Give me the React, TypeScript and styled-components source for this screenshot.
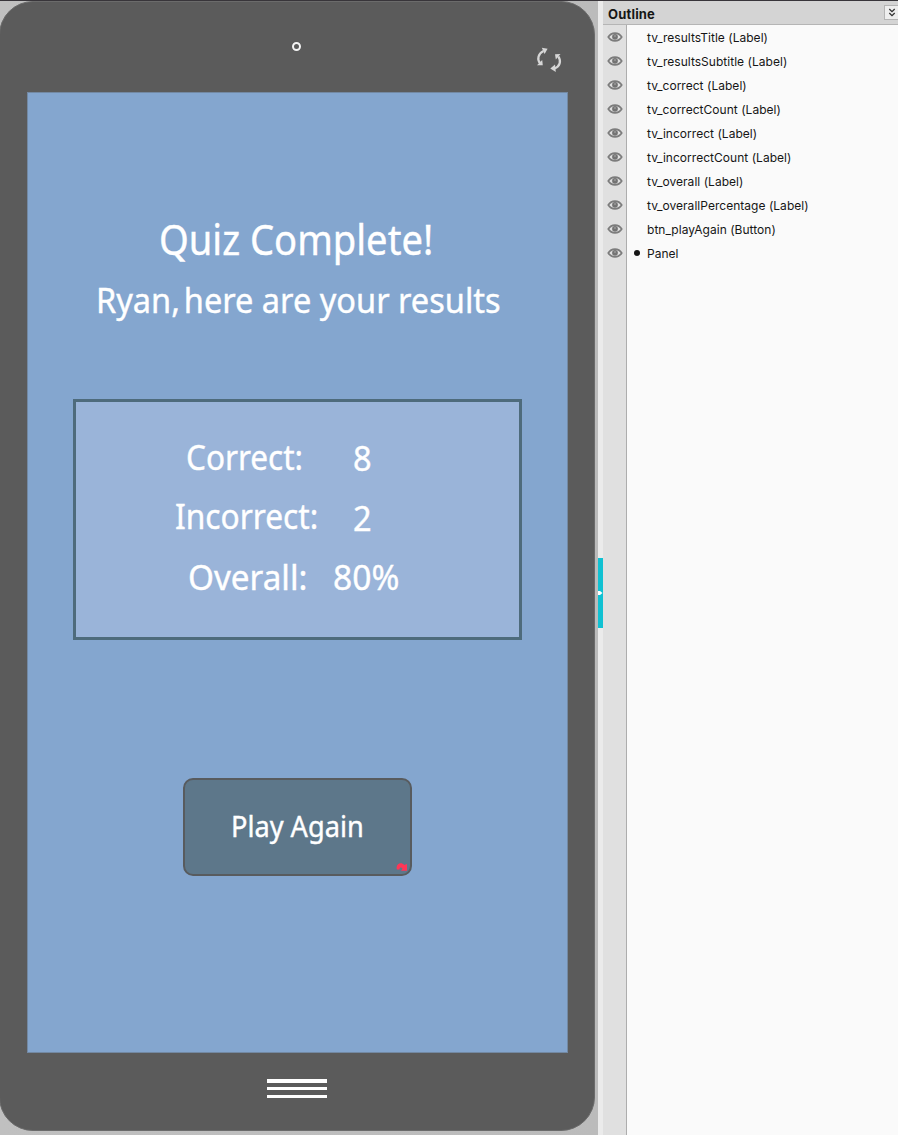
import React from "react";
import styled, { createGlobalStyle } from "styled-components";

const GlobalStyle = createGlobalStyle`
  *, *::before, *::after { box-sizing: border-box; }
  body { margin: 0; overflow: hidden; }
`;

const Editor = styled.div`
  display: flex;
  width: 898px;
  height: 1135px;
  border-top: 1px solid #38353a;
  background: #fafafa;
  overflow: hidden;
`;

const Stage = styled.main`
  width: 598px;
  flex: none;
  background: linear-gradient(90deg, #c0c0c0, #bbb);
`;

const Phone = styled.div`
  display: flex;
  flex-direction: column;
  width: 595.5px;
  height: 1130px;
  margin-top: -0.5px;
  margin-left: -1px;
  border: 1px solid #6b6b6b;
  border-radius: 34px;
  background: #5b5b5b;
`;

const PhoneTop = styled.div`
  display: flex;
  height: 90.4px;
  flex: none;
`;

const Camera = styled.span`
  width: 9.4px;
  height: 9.4px;
  margin: 40.4px 0 0 292px;
  border: 2px solid #f4f4f4;
  border-radius: 50%;
`;

const RotateIcon = styled.svg`
  width: 28px;
  height: 28px;
  margin: 43px 0 0 233.6px;
`;

const Screen = styled.section`
  display: flex;
  flex-direction: column;
  align-items: flex-start;
  width: 541px;
  height: 961px;
  flex: none;
  margin-left: 27px;
  padding-top: 117px;
  border: 1px solid #7389a3;
  background: #84a6cf;
  color: #fff;
  font-family: "Noto Sans", sans-serif;
`;

const Line = styled.div<{ $left: number; $size: number; $height: number; $stretch: number }>`
  flex: none;
  margin-left: ${(p) => p.$left}px;
  font-size: ${(p) => p.$size}px;
  height: ${(p) => p.$height}px;
  line-height: ${(p) => p.$height}px;
  white-space: nowrap;
  -webkit-text-stroke: 0.4px #fff;
  transform: scaleX(${(p) => p.$stretch});
  transform-origin: 0 50%;
`;

const Comma = styled.span`
  letter-spacing: -5px;
`;

const ResultsPanel = styled.div`
  width: 449px;
  height: 241px;
  margin: 67px 0 0 45px;
  padding-top: 25px;
  border: 3px solid #4e6b7c;
  background: #9ab4d9;
`;

const ResultRow = styled.div`
  display: grid;
  grid-template-columns: 257px 1fr;
  height: 60px;
`;

const PlayButton = styled.button`
  display: flex;
  position: relative;
  width: 229px;
  height: 98px;
  margin: 138px 0 0 155px;
  padding: 0;
  border: 2px solid #585b5e;
  border-radius: 10px;
  background: #5d778a;
  color: #fff;
  font-family: inherit;
`;

const LinkMark = styled.svg`
  position: absolute;
  right: 2px;
  bottom: 2px;
  width: 12px;
  height: 10px;
`;

const PhoneBottom = styled.div`
  display: flex;
  flex-direction: column;
  gap: 4.5px;
  padding: 26.6px 0 0 267px;
`;

const MenuBar = styled.span`
  width: 60px;
  height: 3.1px;
  background: #fff;
`;

const Splitter = styled.div`
  display: flex;
  flex-direction: column;
  justify-content: center;
  width: 5px;
  flex: none;
  padding-top: 50px;
  background: #ebebeb;
`;

const Handle = styled.div`
  display: flex;
  align-items: center;
  width: 5px;
  height: 70px;
  margin-top: -1px;
  background: #10c1d2;
`;

const Outline = styled.aside`
  display: flex;
  flex-direction: column;
  flex: 1;
  font-family: Inter, sans-serif;
  color: #161616;
`;

const OutlineHeader = styled.header`
  display: flex;
  justify-content: space-between;
  height: 24px;
  flex: none;
  padding-left: 5px;
  border-bottom: 1px solid #b5b5b5;
  background: #d4d4d4;
`;

const OutlineTitle = styled.h1`
  margin: 0;
  font-size: 13px;
  font-weight: 700;
  letter-spacing: 0.18px;
  line-height: 27px;
`;

const Collapse = styled.button`
  display: flex;
  width: 14px;
  height: 15px;
  margin-top: 4px;
  padding: 2px 0 0 3px;
  border: 1px solid #b4b4b4;
  border-right: 0;
  background: #eee;
`;

const Tree = styled.ul`
  flex: 1;
  margin: 0;
  padding: 0;
  list-style: none;
  background: linear-gradient(90deg, #e0e0e0 23px, #adadad 23px, #adadad 24px, #fafafa 24px);
`;

const TreeRow = styled.li`
  display: grid;
  grid-template-columns: 24px 20px 1fr;
  align-items: center;
  height: 24px;
  font-size: 12px;
  letter-spacing: 0.03px;
  line-height: 24px;
  white-space: nowrap;
`;

const Dot = styled.i`
  width: 6px;
  height: 6px;
  margin: -1px 0 0 7px;
  border-radius: 50%;
  background: #151515;
`;

const Name = styled.span`
  grid-column: 3;
  padding-top: 1px;
`;

const EyeIcon = styled.svg`
  width: 16px;
  height: 12px;
  margin: -1px 0 0 4px;
`;

const items = [
  "tv_resultsTitle (Label)",
  "tv_resultsSubtitle (Label)",
  "tv_correct (Label)",
  "tv_correctCount (Label)",
  "tv_incorrect (Label)",
  "tv_incorrectCount (Label)",
  "tv_overall (Label)",
  "tv_overallPercentage (Label)",
  "btn_playAgain (Button)",
  "Panel",
];

function Eye() {
  return (
    <EyeIcon viewBox="0 0 16 12">
      <path d="M1.3 6C4.4.7 11.6.7 14.7 6C11.6 11.1 4.4 11.1 1.3 6Z" fill="none" stroke="#7c7c7c" strokeWidth="1.7" />
      <circle cx="8" cy="5.8" r="2.9" fill="#747474" />
      <path d="M8 4v2" stroke="#aaa" strokeWidth="1" />
    </EyeIcon>
  );
}

export default function App() {
  return (
    <>
      <GlobalStyle />
      <Editor>
        <Stage>
          <Phone>
            <PhoneTop>
              <Camera />
              <RotateIcon viewBox="0 0 28 28" fill="none" stroke="#d6d6d6" strokeWidth="2.2">
                <path d="M5.2 18.5C1.8 14.5 3 8.5 8.5 6" />
                <path d="M6.8 2.8L12.6 3.7L9.6 9Z" fill="#d6d6d6" stroke="none" />
                <path d="M2 20.2L7.8 20.2L7.2 15Z" fill="#d6d6d6" stroke="none" />
                <path d="M23.3 11.5C26.5 16 25 21.5 19.5 23.5" />
                <path d="M20 9.2L25.5 9L20.8 14.5Z" fill="#d6d6d6" stroke="none" />
                <path d="M15.3 23.4L20 19.6L20.8 27Z" fill="#d6d6d6" stroke="none" />
              </RotateIcon>
            </PhoneTop>
            <Screen>
              <Line $left={131} $size={41} $height={58} $stretch={0.93}>Quiz Complete!</Line>
              <Line $left={68} $size={35} $height={64} $stretch={0.93}>
                Ryan<Comma>,</Comma> here are your results
              </Line>
              <ResultsPanel>
                <ResultRow>
                  <Line $left={110} $size={35} $height={60} $stretch={0.9}>Correct:</Line>
                  <Line $left={20} $size={35} $height={62} $stretch={0.93}>8</Line>
                </ResultRow>
                <ResultRow>
                  <Line $left={99} $size={35} $height={57} $stretch={0.905}>Incorrect:</Line>
                  <Line $left={20} $size={35} $height={62} $stretch={0.93}>2</Line>
                </ResultRow>
                <ResultRow>
                  <Line $left={112} $size={35} $height={60} $stretch={0.95}>Overall:</Line>
                  <Line $left={0} $size={35} $height={60} $stretch={0.96}>80%</Line>
                </ResultRow>
              </ResultsPanel>
              <PlayButton>
                <Line $left={46} $size={29} $height={92} $stretch={0.937}>Play Again</Line>
                <LinkMark viewBox="0 0 12 10">
                  <path d="M.8 7.5C-.5 1.2 5.5-.5 8.2 3L11 2V8.8H5L6.5 6.7C5.5 5 3.7 5.2 3.5 7.5Z" fill="#ff3656" />
                </LinkMark>
              </PlayButton>
            </Screen>
            <PhoneBottom>
              <MenuBar />
              <MenuBar />
              <MenuBar />
            </PhoneBottom>
          </Phone>
        </Stage>
        <Splitter>
          <Handle>
            <svg width="5" height="6" viewBox="0 0 5 6"><path d="M0 1H2L4.5 3L2 5H0Z" fill="#fff" /></svg>
          </Handle>
        </Splitter>
        <Outline>
          <OutlineHeader>
            <OutlineTitle>Outline</OutlineTitle>
            <Collapse>
              <svg width="8" height="10" viewBox="0 0 8 10" fill="none" stroke="#333" strokeWidth="1.3">
                <path d="M1.3 1L4 3.6L6.7 1M1.3 5L4 7.6L6.7 5" />
              </svg>
            </Collapse>
          </OutlineHeader>
          <Tree>
            {items.map((name) => (
              <TreeRow key={name}>
                <Eye />
                {name === "Panel" && <Dot />}
                <Name>{name}</Name>
              </TreeRow>
            ))}
          </Tree>
        </Outline>
      </Editor>
    </>
  );
}
